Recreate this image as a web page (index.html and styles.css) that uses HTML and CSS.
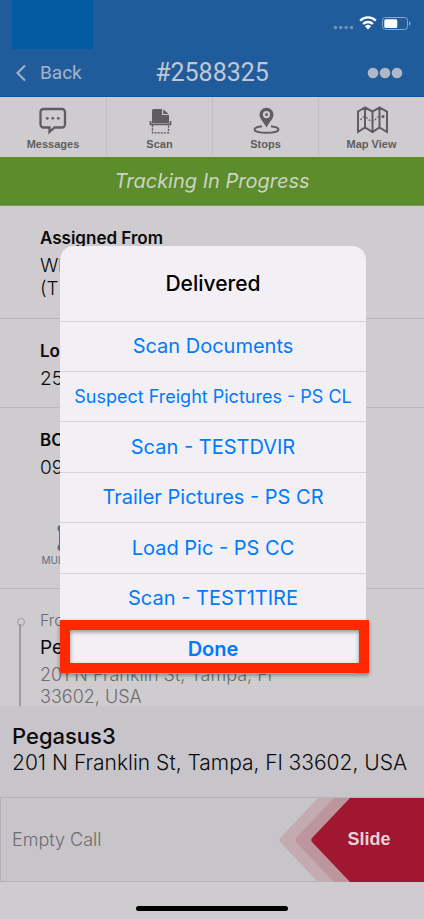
FILE: index.html
```html
<!DOCTYPE html>
<html lang="en">
<head>
    <meta charset="UTF-8">
    <meta name="viewport" content="width=device-width, initial-scale=1.0">
    <title>#2588325</title>
    <link rel="stylesheet" href="styles.css">
</head>
<body>
    <div class="screen">
        <header class="header">
            <div class="status">
                <div class="status-block"></div>
                <svg class="status-icons" width="78" height="18" viewBox="0 0 78 18" aria-hidden="true">
                    <g fill="#6f93bd">
                        <circle cx="2.500" cy="12.500" r="1.800"/>
                        <circle cx="7.800" cy="12.500" r="1.800"/>
                        <circle cx="13.200" cy="12.500" r="1.800"/>
                        <circle cx="18.500" cy="12.500" r="1.800"/>
                    </g>
                    <g fill="none" stroke="#fff" stroke-width="2.400">
                        <path d="M27.200 5.600a11 11 0 0 1 15.600 0"/>
                        <path d="M30.100 9a7 7 0 0 1 9.800 0"/>
                    </g>
                    <path d="M31.900 11.200a4.600 4.600 0 0 1 6.200 0L35 14.400z" fill="#fff"/>
                    <rect x="49.500" y="2.500" width="25" height="12" rx="3" fill="none" stroke="#8aa6c9"/>
                    <rect x="51.300" y="4.300" width="13" height="8.600" rx="1.500" fill="#fff"/>
                    <path d="M76 6.500c2 .6 2 3.400 0 4z" fill="#8aa6c9"/>
                </svg>
            </div>
            <nav class="navbar">
                <button class="back" type="button">
                    <svg width="10" height="18" viewBox="0 0 10 18" aria-hidden="true">
                        <path d="M9 1.500 1.500 9 9 16.500" fill="none" stroke="#a5b4cb" stroke-width="2"/>
                    </svg>
                    Back
                </button>
                <h1 class="title">#2588325</h1>
                <button class="more" type="button" aria-label="More">
                    <svg width="36" height="12" viewBox="0 0 36 12" aria-hidden="true">
                        <g fill="#b0b8c8">
                            <circle cx="6" cy="6" r="5.300"/>
                            <circle cx="18" cy="6" r="5.300"/>
                            <circle cx="30" cy="6" r="5.300"/>
                        </g>
                    </svg>
                </button>
            </nav>
        </header>

        <div class="tabs">
            <button class="tab" type="button">
                <svg width="34" height="30" viewBox="0 0 34 30" aria-hidden="true">
                    <path d="M7.500 4h18.500a3 3 0 0 1 3 3v12.500a3 3 0 0 1-3 3h-7.500l-5 4.500v-4.500h-6a3 3 0 0 1-3-3V7a3 3 0 0 1 3-3z" fill="none" stroke="#5f5d60" stroke-width="2.300"/>
                    <g fill="#5f5d60">
                        <circle cx="11.300" cy="13.300" r="1.400"/>
                        <circle cx="16.800" cy="13.300" r="1.400"/>
                        <circle cx="22.300" cy="13.300" r="1.400"/>
                    </g>
                </svg>
                Messages
            </button>
            <button class="tab" type="button">
                <svg width="34" height="30" viewBox="0 0 34 30" aria-hidden="true">
                    <path d="M9 18V5.500A1.500 1.500 0 0 1 10.500 4H19v6h7v8z" fill="#5f5d60"/>
                    <path d="M20.200 4.200 25.700 9H20.200z" fill="#5f5d60"/>
                    <path d="M7.500 16v3.300h20V16" fill="none" stroke="#5f5d60" stroke-width="1.700"/>
                    <path d="M9.500 20v7.800h16V20" fill="none" stroke="#5f5d60" stroke-width="1.300" stroke-dasharray="2.200 1"/>
                </svg>
                Scan
            </button>
            <button class="tab" type="button">
                <svg width="34" height="30" viewBox="0 0 34 30" aria-hidden="true">
                    <path fill-rule="evenodd" d="M17.500 22.500C15 17.500 10.500 14 10.500 9.800a7 7 0 0 1 14 0c0 4.200-4.500 7.700-7 12.700zM17.500 6a3.600 3.600 0 1 0 0 7.200 3.600 3.600 0 0 0 0-7.200z" fill="#5f5d60"/>
                    <circle cx="17.500" cy="9.600" r="1.500" fill="#5f5d60"/>
                    <path d="M13 21.200c-4 .5-7.500 1.700-7.500 3.300 0 2 5 3.300 12 3.300s12-1.300 12-3.300c0-1.600-3.500-2.800-7.500-3.300" fill="none" stroke="#5f5d60" stroke-width="2"/>
                </svg>
                Stops
            </button>
            <button class="tab" type="button">
                <svg width="34" height="30" viewBox="0 0 34 30" aria-hidden="true">
                    <path d="M3 6.500 10 2.500l7.500 4 7-4 7.500 4V27l-7.500-4.500-7 4.500-7.500-4.500L3 27zM10 2.500v20M17.500 6.500V27M24.500 2.500v20" fill="none" stroke="#5f5d60" stroke-width="2"/>
                    <path d="M5.500 15C8 11 10 11 12 13s4 4 6.500 3 2.500-4 7-5" fill="none" stroke="#5f5d60" stroke-width="1.200" stroke-dasharray="2 1.500"/>
                    <circle cx="28" cy="11.500" r="1.500" fill="#5f5d60"/>
                </svg>
                Map View
            </button>
        </div>

        <div class="banner">Tracking In Progress</div>

        <main class="details">
            <section class="detail detail-assigned">
                <h2>Assigned From</h2>
                <p>Wh<br>(T</p>
            </section>
            <section class="detail detail-load">
                <h2>Lo</h2>
                <p>25</p>
            </section>
            <section class="detail detail-bol">
                <h2>BO</h2>
                <p>09</p>
                <div class="multi">
                    <svg width="28" height="28" viewBox="0 0 28 28" aria-hidden="true">
                        <path d="M5 5v18M23 5v18M5 14h18" fill="none" stroke="#5b6b84" stroke-width="4"/>
                        <g fill="#5b6b84">
                            <circle cx="5" cy="4.500" r="3.500"/>
                            <circle cx="5" cy="23.500" r="3.500"/>
                            <circle cx="23" cy="4.500" r="3.500"/>
                            <circle cx="23" cy="23.500" r="3.500"/>
                        </g>
                    </svg>
                    MULTISTOP
                </div>
            </section>
            <section class="stop">
                <div class="stop-line"></div>
                <div class="stop-text">
                    <span class="stop-label">From</span>
                    <span class="stop-name">Pegasus3</span>
                    <span class="stop-address">201 N Franklin St, Tampa, Fl<br>33602, USA</span>
                </div>
            </section>
        </main>

        <footer class="footer">
            <div class="current">
                <h2>Pegasus3</h2>
                <p>201 N Franklin St, Tampa, Fl 33602, USA</p>
            </div>
            <div class="slider">
                <span class="slider-label">Empty Call</span>
                <button class="slide" type="button">
                    <svg class="slide-arrows" width="146" height="84" viewBox="0 0 146 84" aria-hidden="true">
                        <path d="M146 0H40L2.500 39.500q-2.500 2.500 0 5L40 84H146z" fill="#c4aab1"/>
                        <path d="M146 0H56L18.500 39.500q-2.500 2.500 0 5L56 84H146z" fill="#bc959d"/>
                        <path d="M146 0H72L34.500 39.500q-2.500 2.500 0 5L72 84H146z" fill="#9f1731"/>
                    </svg>
                    <span class="slide-text">Slide</span>
                </button>
            </div>
            <div class="home"></div>
        </footer>

        <div class="overlay">
            <div class="dialog" role="dialog" aria-labelledby="dialogTitle">
                <h2 class="dialog-title" id="dialogTitle">Delivered</h2>
                <div class="actions">
                    <button class="action" type="button">Scan Documents</button>
                    <button class="action action-small" type="button">Suspect Freight Pictures - PS CL</button>
                    <button class="action" type="button">Scan - TESTDVIR</button>
                    <button class="action" type="button">Trailer Pictures - PS CR</button>
                    <button class="action" type="button">Load Pic - PS CC</button>
                    <button class="action" type="button">Scan - TEST1TIRE</button>
                    <button class="action action-done" type="button">Done</button>
                </div>
            </div>
        </div>
    </div>
</body>
</html>
```
FILE: styles.css
```css
* {
    box-sizing: border-box;
}
body {
    margin: 0;
    font-family: Inter, "Liberation Sans", sans-serif;
    background-color: #cfcccf;
    color: #0b0b0d;
}
h1, h2, p {
    margin: 0;
}
button {
    margin: 0;
    padding: 0;
    border: 0;
    background: none;
    font: inherit;
    color: inherit;
    cursor: pointer;
}
.screen {
    position: relative;
    display: flex;
    flex-direction: column;
    min-height: 100vh;
}

/* Header */
.header {
    background-color: #205c9b;
    border-bottom: 1px solid #0c559c;
    font-family: Roboto, sans-serif;
}
.status {
    display: flex;
    justify-content: space-between;
    padding: 0 13px 0 12px;
}
.status-block {
    width: 81px;
    height: 49px;
    background-color: #005ba1;
}
.status-icons {
    margin-top: 15px;
}
.navbar {
    display: grid;
    grid-template-columns: 1fr auto 1fr;
    align-items: center;
    height: 47px;
    padding: 0 16px;
}
.back {
    display: flex;
    align-items: center;
    gap: 14px;
    font-size: 19px;
    color: #a5b4cb;
}
.title {
    font-size: 25px;
    font-weight: 400;
    color: #c3c7d3;
}
.more {
    justify-self: end;
    display: flex;
    padding-right: 5px;
}

/* Tabs */
.tabs {
    display: grid;
    grid-template-columns: repeat(4, 1fr);
    height: 60px;
}
.tab {
    display: flex;
    flex-direction: column;
    align-items: center;
    gap: 3px;
    padding-top: 8px;
    font: bold 11px/13px "Liberation Sans", sans-serif;
    color: #5f5d60;
}
.tab + .tab {
    border-left: 1px solid #c3c0c4;
}
.banner {
    height: 49px;
    background-color: #5c8c2b;
    border-bottom: 1px solid #779a55;
    font-size: 20px;
    font-style: italic;
    line-height: 49px;
    text-align: center;
    color: #ccd3c3;
}

/* Load details */
.detail {
    padding: 20px 40px 0;
    border-bottom: 1px solid #bab7bb;
}
.detail h2 {
    font-size: 17px;
    font-weight: 600;
    line-height: 24px;
}
.detail p {
    padding-top: 4px;
    font-size: 19px;
    font-weight: 300;
    line-height: 23px;
}
.detail-assigned {
    height: 113px;
}
.detail-load {
    height: 89px;
}
.detail-bol {
    height: 181px;
}
.multi {
    display: flex;
    flex-direction: column;
    align-items: center;
    gap: 2px;
    width: 60px;
    margin-top: 45px;
    font-size: 10px;
    color: #5b6b84;
}
.stop {
    display: flex;
    gap: 17px;
    height: 117px;
    padding-left: 17px;
}
.stop-line {
    position: relative;
    width: 6px;
    margin-top: 35px;
    background: linear-gradient(#9c9aa5, #9c9aa5) center / 2px 100% no-repeat;
}
.stop-line::before {
    content: "";
    position: absolute;
    left: 0;
    top: -6px;
    width: 6px;
    height: 6px;
    border: 1px solid #9c9aa5;
    border-radius: 50%;
}
.stop-text {
    display: flex;
    flex-direction: column;
    padding-top: 19px;
    font-weight: 300;
    color: #6d6b6e;
}
.stop-label {
    font-size: 16px;
    line-height: 24px;
}
.stop-name {
    font-size: 19px;
    font-weight: 400;
    line-height: 32px;
    color: #0b0b0d;
}
.stop-address {
    font-size: 18px;
    line-height: 22px;
}

/* Footer */
.footer {
    margin-top: auto;
}
.current {
    height: 91px;
    padding: 17px 12px 0;
    background-color: #c7c5ca;
}
.current h2 {
    font-size: 22px;
    font-weight: 500;
    line-height: 27px;
}
.current p {
    font-size: 21px;
    font-weight: 300;
    line-height: 26px;
    white-space: nowrap;
}
.slider {
    display: flex;
    justify-content: space-between;
    align-items: center;
    height: 85px;
    padding-left: 11px;
    background-color: #c7c5ca;
    border: 1px solid #b4b2b8;
    border-right: 0;
}
.slider-label {
    font-size: 18px;
    font-weight: 300;
    color: #6d6b6e;
}
.slide {
    display: grid;
    align-items: center;
    color: #e6d0d5;
    font-family: "Liberation Sans", sans-serif;
    font-size: 18px;
    font-weight: bold;
}
.slide-arrows,
.slide-text {
    grid-area: 1 / 1;
}
.slide-text {
    padding-left: 36px;
}
.home {
    width: 152px;
    height: 5px;
    margin: 24px auto 8px;
    border-radius: 3px;
    background-color: #000;
}

/* Dialog */
.overlay {
    position: absolute;
    inset: 0;
    display: flex;
    align-items: center;
    padding: 0 58px 0 60px;
}
.dialog {
    width: 100%;
    border-radius: 14px;
    background-color: #f2f0f4;
    text-align: center;
}
.dialog-title {
    font-size: 21px;
    font-weight: 500;
    line-height: 75px;
    color: #000;
}
.actions {
    display: grid;
    grid-auto-rows: 1fr;
    height: 353px;
}
.action {
    border-top: 1px solid #d5d3d8;
    font-size: 20px;
    color: #007aff;
}
.action-small {
    font-size: 18px;
}
.action-done {
    position: relative;
    font-weight: 600;
}
/* highlight round the done button */
.action-done::after {
    content: "";
    position: absolute;
    inset: -4px -3px 0 0;
    border: 10px solid #ff2800;
    filter: drop-shadow(0 2px 2px rgba(0, 0, 0, 0.4));
}
```
